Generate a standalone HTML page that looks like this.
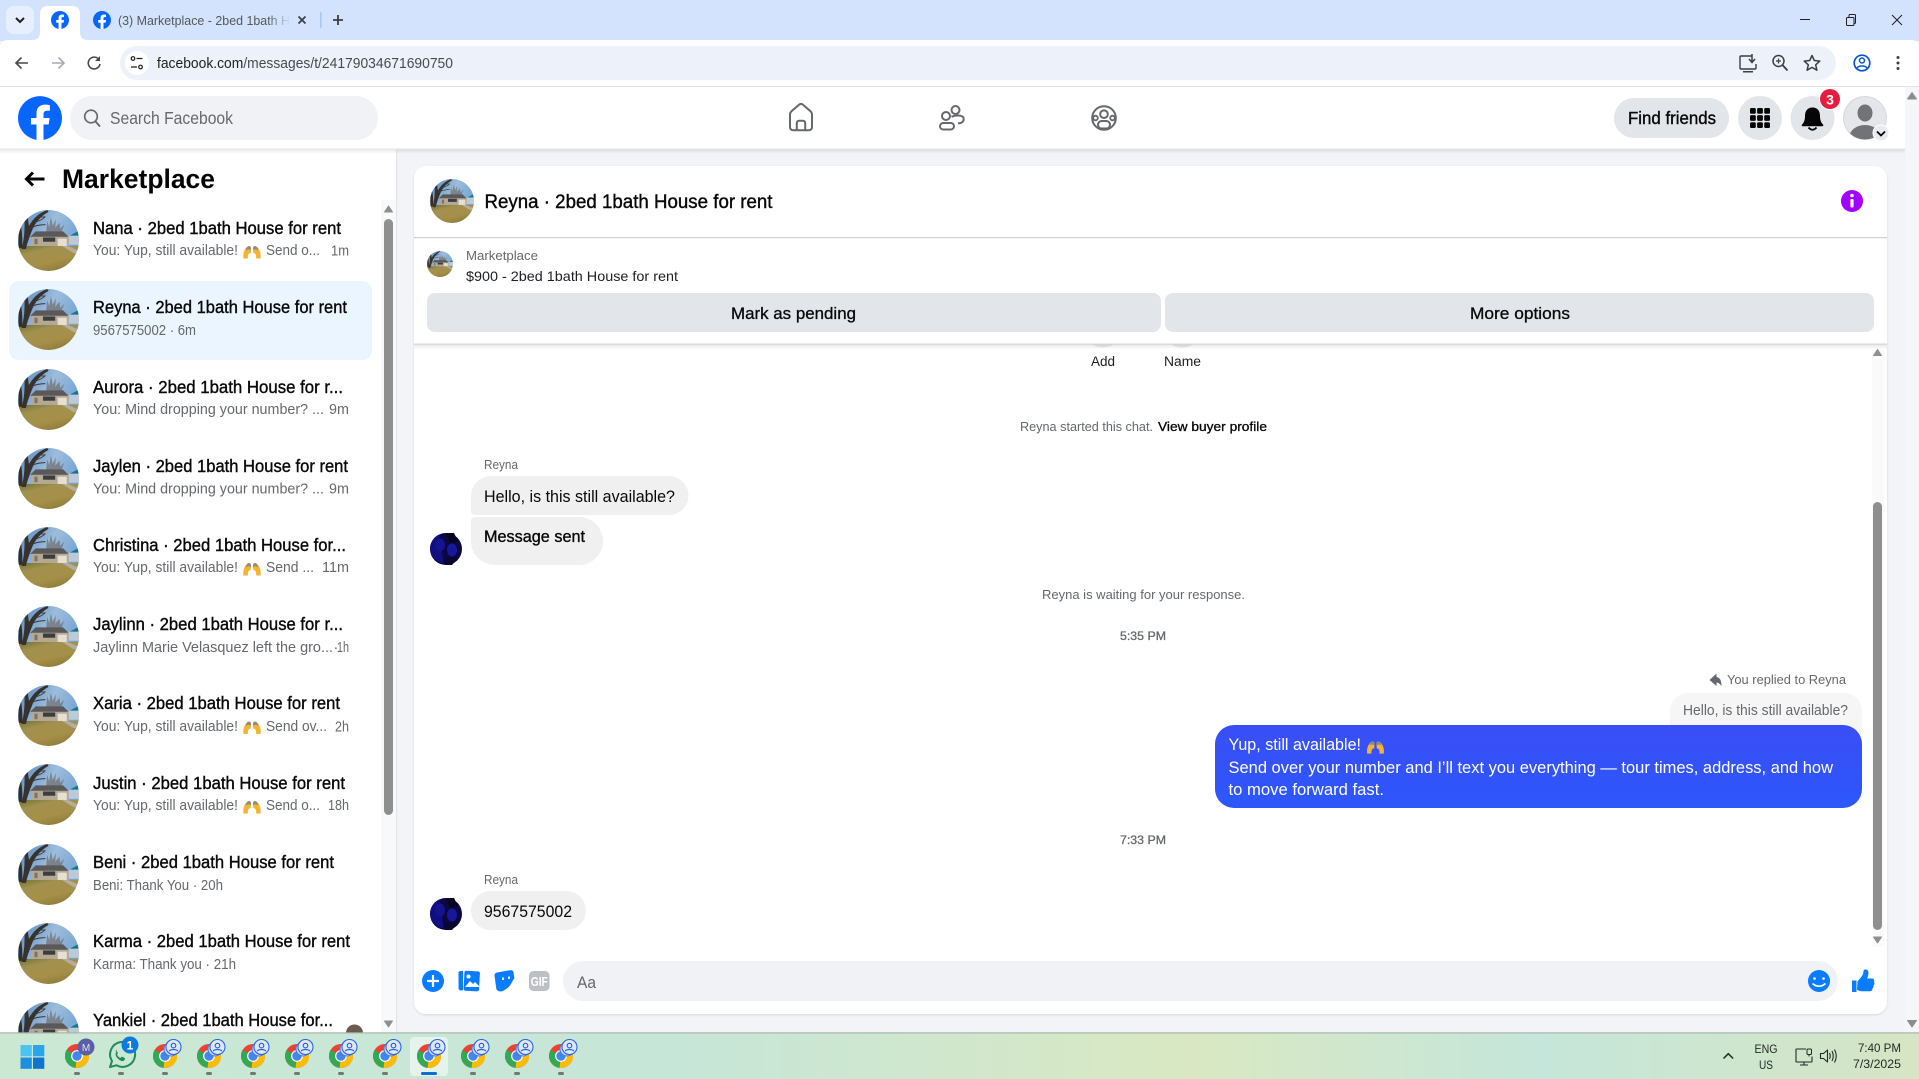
<!DOCTYPE html>
<html lang="en"><head><meta charset="utf-8"><title>(3) Marketplace - 2bed 1bath House for rent</title>
<style>
html,body{margin:0;padding:0;width:1919px;height:1079px;overflow:hidden;background:#f2f4f7}
svg{display:block}
text{font-family:"Liberation Sans",sans-serif;white-space:pre}
.t{font-size:17.5px;fill:#080809;stroke:#080809;stroke-width:.38}
.s{font-size:14.5px;fill:#65686c}
.g{font-size:13px;fill:#65686c}
</style></head><body>
<svg width="1919" height="1079" viewBox="0 0 1919 1079" xmlns="http://www.w3.org/2000/svg">
<defs>
<linearGradient id="tb" x1="0" x2="1" y1="0" y2="0"><stop offset="0" stop-color="#cbe8d3"/><stop offset=".35" stop-color="#c6e6d8"/><stop offset=".62" stop-color="#d9e8c2"/><stop offset=".8" stop-color="#c5e6da"/><stop offset="1" stop-color="#d6e5c4"/></linearGradient>
<linearGradient id="bl" x1="0" x2="0" y1="0" y2="1"><stop offset="0" stop-color="#3a4ef6"/><stop offset="1" stop-color="#2c57fb"/></linearGradient>
<linearGradient id="fade" x1="0" x2="1" y1="0" y2="0"><stop offset="0" stop-color="#d3e3fd" stop-opacity="0"/><stop offset="1" stop-color="#d3e3fd"/></linearGradient>
<linearGradient id="shd" x1="0" x2="0" y1="0" y2="1"><stop offset="0" stop-color="#000" stop-opacity=".09"/><stop offset="1" stop-color="#000" stop-opacity="0"/></linearGradient>
<linearGradient id="sky" x1="0" x2="1" y1="0" y2=".6"><stop offset="0" stop-color="#4f86c0"/><stop offset=".5" stop-color="#9dbcdb"/><stop offset="1" stop-color="#6c9fd2"/></linearGradient>
<linearGradient id="gr" x1="0" x2=".6" y1="0" y2="1"><stop offset="0" stop-color="#6d7038"/><stop offset=".3" stop-color="#a2914f"/><stop offset=".7" stop-color="#a68f48"/><stop offset="1" stop-color="#8f7e3a"/></linearGradient>
<filter id="sf" x="-5%" y="-5%" width="110%" height="110%"><feDropShadow dx="0" dy="1" stdDeviation="1" flood-color="#000" flood-opacity=".12"/></filter>
<filter id="bl1"><feGaussianBlur stdDeviation=".5"/></filter>
<clipPath id="cc"><circle cx="50" cy="50" r="50"/></clipPath>
<clipPath id="acl"><circle cx="1865" cy="118" r="21.5"/></clipPath>
<symbol id="fb" viewBox="0 0 24 24"><path fill="#0866ff" d="M24 12.073c0-6.627-5.373-12-12-12s-12 5.373-12 12c0 5.99 4.388 10.954 10.125 11.854v-8.385H7.078v-3.47h3.047V9.43c0-3.007 1.792-4.669 4.533-4.669 1.312 0 2.686.235 2.686.235v2.953H15.83c-1.491 0-1.956.925-1.956 1.874v2.25h3.328l-.532 3.47h-2.796v8.385C19.612 23.027 24 18.062 24 12.073z"/><path fill="#fff" d="M16.671 15.543l.532-3.47h-3.328V9.823c0-.949.465-1.874 1.956-1.874h1.513V4.996s-1.374-.235-2.686-.235c-2.741 0-4.533 1.662-4.533 4.669v2.643H7.078v3.47h3.047V24h3.75v-8.457z"/></symbol>
<symbol id="house" viewBox="0 0 100 100"><g clip-path="url(#cc)"><g filter="url(#bl1)">
<rect width="100" height="100" fill="url(#sky)"/>
<path d="M46 36l2-18 3 10 3-16 3 14 5-11-1 14 7-8 1 10 7-7-5 12z" fill="#6f6c6c" opacity=".7"/>
<path d="M85 42l15-8v10H85z" fill="#14758c"/>
<rect x="83" y="42" width="17" height="15" fill="#bcc9d6"/>
<path d="M20 44L29 35H74L83 44z" fill="#5a5858"/>
<rect x="23" y="44" width="60" height="16" fill="#b4a994"/>
<rect x="41" y="45" width="20" height="7" fill="#3e3c40"/>
<rect x="65" y="47" width="15" height="12" fill="#e6e0d2"/>
<rect x="27" y="47" width="5" height="9" fill="#7d7367"/>
<rect y="59" width="100" height="41" fill="url(#gr)"/>
<path d="M72 59h10l18 8v6l-10-3z" fill="#b3ad9d"/>
<path d="M6 64C10 46 12 36 10 0h5c1 14 2 20 3 26C25 14 34 5 48 0l2 3C37 10 27 22 22 36c-3 8-7 18-9 28z" fill="#37322d"/>
<path d="M0 62C2 46 1 30-1 18l4-2c3 14 5 30 4 46z" fill="#322d29"/>
<path d="M14 24C10 16 6 10 0 6M19 30c8-4 16-6 26-6M24 20C30 20 36 18 44 12M4 30C2 26 0 24-2 22M33 10c4 2 7 2 12 1M10 12C6 8 4 6 2 2" stroke="#3d3833" stroke-width="1.500" fill="none"/>
</g></g></symbol>
<symbol id="face" viewBox="0 0 32 32"><circle cx="16" cy="16" r="16" fill="#0c0742"/><path d="M0 16A16 16 0 0 1 9 1.500l5 29A16 16 0 0 1 0 16z" fill="#100e80"/><ellipse cx="10" cy="12" rx="5" ry="6.500" fill="#15148e"/><ellipse cx="22" cy="17" rx="5" ry="6.500" fill="#16189a"/><path d="M16 0h8l4 8-8 2z" fill="#06041e"/><path d="M13 28c4-5 10-5 15-3l-6 7h-6z" fill="#090630"/></symbol>
<symbol id="em" viewBox="0 0 20 16"><path d="M.5 15.500C-.2 9.500 1.500 4.500 5.500 2c2-1 3.500 0 3.500 2.500l-.5 5C6 9.500 5 12 5.500 15.500z" fill="#f6b32e"/><path d="M19.500 15.500C20.200 9.500 18.500 4.500 14.500 2c-2-1-3.500 0-3.500 2.500l.5 5c2.500 0 3.500 2.500 3 6z" fill="#f6b32e"/><path d="M5 2.300c2-1.300 3.700-.3 4 2L8.800 6C7 5 5 5 3 6.500 3.300 4.800 4 3.300 5 2.300zM15 2.300c-2-1.300-3.700-.3-4 2l.2 1.700c1.800-1 3.800-1 5.800.5-.3-1.700-1-3.200-2-4.200z" fill="#8f8a80"/></symbol>
<symbol id="chrome" viewBox="0 0 24 24"><circle cx="12" cy="12" r="12" fill="#ea4335"/><path d="M12 12L1.600 6A12 12 0 0 0 10.500 23.900z" fill="#34a853"/><path d="M12 6h10.400A12 12 0 0 1 10.500 23.900L12 12z" fill="#fbbc04"/><circle cx="12" cy="12" r="5.900" fill="#fff"/><circle cx="12" cy="12" r="4.700" fill="#4285f4"/></symbol>
<symbol id="pb" viewBox="0 0 18 18"><circle cx="7.500" cy="10" r="7" fill="#c7d4f4" stroke="#4a78d8" stroke-width="1"/><circle cx="10" cy="8" r="7.500" fill="#dfe7fb" stroke="#2f66d8" stroke-width="1.100"/><circle cx="10" cy="6.600" r="2.300" fill="none" stroke="#1f5fd6" stroke-width="1.100"/><path d="M5.600 12.200c1-2.200 7.800-2.200 8.800 0" fill="none" stroke="#1f5fd6" stroke-width="1.100"/></symbol>
</defs>

<!-- page background -->
<rect width="1919" height="1079" fill="#f2f4f7"/>

<!-- browser tab strip -->
<rect width="1919" height="41" fill="#d3e3fd"/>
<rect x="6" y="6" width="28" height="28" rx="8" fill="#e8effc"/>
<path d="M16 18l4 4 4-4" fill="none" stroke="#1f1f1f" stroke-width="2"/>
<path d="M32 40c5 0 8-2 8-8V14c0-5 3-8 8-8h24c5 0 8 3 8 8v18c0 6 3 8 8 8z" fill="#fff"/>
<use href="#fb" x="51" y="11" width="18" height="18"/>
<use href="#fb" x="93" y="11" width="18" height="18"/>
<text x="118" y="25" font-size="13" fill="#55585c" textLength="172" lengthAdjust="spacingAndGlyphs">(3) Marketplace - 2bed 1bath H</text>
<rect x="268" y="8" width="22" height="24" fill="url(#fade)"/>
<path d="M298.500 16.500l7 7M305.500 16.500l-7 7" stroke="#3b3e42" stroke-width="1.700"/>
<rect x="320" y="12" width="1.600" height="16" fill="#a8c7fa"/>
<path d="M338 15v10M333 20h10" stroke="#3b3e42" stroke-width="1.800"/>
<path d="M1800 19.500h10" stroke="#1f1f1f" stroke-width="1"/>
<rect x="1846.500" y="17.500" width="7.500" height="8" rx="1" fill="none" stroke="#1f1f1f" stroke-width="1"/><path d="M1849 17v-1.500q0-1 1-1h4.500q1 0 1 1v7q0 1-1 1" fill="none" stroke="#1f1f1f"/>
<path d="M1892 15l10 10M1902 15l-10 10" stroke="#1f1f1f" stroke-width="1"/>

<!-- toolbar -->
<path d="M0 48q0-8 8-8h1903q8 0 8 8v39H0z" fill="#fff"/>
<path d="M28 63H16.500M21.500 57.500L16 63l5.500 5.500" fill="none" stroke="#474a4e" stroke-width="1.600"/>
<path d="M52 63h12M58.500 57.500L64 63l-5.500 5.500" fill="none" stroke="#a8abaf" stroke-width="1.600"/>
<path d="M98.500 59A5.900 5.900 0 1 0 100 64" fill="none" stroke="#474a4e" stroke-width="1.600"/><path d="M100 56v5h-5z" fill="#474a4e"/>
<rect x="120" y="46" width="1716" height="34" rx="17" fill="#edf2fa"/>
<circle cx="137" cy="63" r="12" fill="#fff"/>
<circle cx="133" cy="58.500" r="1.800" fill="none" stroke="#1f1f1f" stroke-width="1.200"/><path d="M136.500 58.500h6M131 67h6" stroke="#1f1f1f" stroke-width="1.200"/><circle cx="140.500" cy="67" r="1.800" fill="none" stroke="#1f1f1f" stroke-width="1.200"/>
<text x="157" y="68" font-size="14.300" fill="#1f1f1f" textLength="296" lengthAdjust="spacingAndGlyphs">facebook.com<tspan fill="#474a4e">/messages/t/24179034671690750</tspan></text>
<path d="M1752 56h-11q-1 0-1 1v11q0 1 1 1h14q1 0 1-1v-4" fill="none" stroke="#3b3e42" stroke-width="1.400"/><path d="M1743 71h10v1.500h-10z" fill="#3b3e42"/><path d="M1752 54v8M1749 59l3 3.500 3-3.500" fill="none" stroke="#3b3e42" stroke-width="1.500"/>
<circle cx="1778.500" cy="61" r="5.500" fill="none" stroke="#3b3e42" stroke-width="1.500"/><path d="M1782.500 65l5 5.500" stroke="#3b3e42" stroke-width="1.800"/><path d="M1776 61h5M1778.500 58.500v5" stroke="#3b3e42" stroke-width="1.200"/>
<path d="M1812 55.500l2.300 5 5.500.6-4.100 3.700 1.200 5.400-4.900-2.800-4.900 2.800 1.200-5.400-4.100-3.700 5.500-.6z" fill="none" stroke="#3b3e42" stroke-width="1.500" stroke-linejoin="round"/>
<circle cx="1862" cy="63" r="7.800" fill="none" stroke="#0b57d0" stroke-width="1.700"/><circle cx="1862" cy="60.500" r="2.500" fill="none" stroke="#0b57d0" stroke-width="1.500"/><path d="M1856.800 68.500c1.300-3.300 9.100-3.300 10.400 0" fill="none" stroke="#0b57d0" stroke-width="1.500"/>
<circle cx="1898" cy="57.500" r="1.500" fill="#3b3e42"/><circle cx="1898" cy="63" r="1.500" fill="#3b3e42"/><circle cx="1898" cy="68.500" r="1.500" fill="#3b3e42"/>
<rect y="86" width="1919" height="1.400" fill="#e1e3e6"/>

<!-- page scrollbar -->
<rect x="1905" y="87" width="14" height="946" fill="#f5f6f9"/>
<path d="M1912 92.500l4.500 6.500h-9z" fill="#8c8c8c" stroke="#8c8c8c" stroke-linejoin="round"/>
<path d="M1912 1027l-4.500-6.500h9z" fill="#8c8c8c" stroke="#8c8c8c" stroke-linejoin="round"/>

<!-- sidebar -->
<rect x="0" y="149" width="396" height="884" fill="#fff"/>
<rect x="396" y="149" width="1.200" height="884" fill="#e3e5e8"/>

<!-- facebook header -->
<rect x="0" y="149" width="1905" height="5" fill="url(#shd)"/>
<rect x="0" y="87" width="1905" height="62" fill="#fff"/>
<rect x="0" y="148.500" width="1905" height=".8" fill="#e3e5e8"/>
<use href="#fb" x="18" y="96" width="44" height="44"/>
<rect x="70" y="96" width="308" height="44" rx="22" fill="#f0f2f5"/>
<circle cx="91" cy="116.500" r="6.300" fill="none" stroke="#65686c" stroke-width="1.700"/><path d="M95.500 121.500l4.500 5" stroke="#65686c" stroke-width="1.900"/>
<text x="110" y="124" font-size="17.500" fill="#65686c" textLength="123" lengthAdjust="spacingAndGlyphs">Search Facebook</text>

<!-- nav icons -->
<g transform="translate(0 .8)"><path d="M790 126v-12q0-2.500 2-4l7-6q2-1.800 4 0l7 6q2 1.500 2 4v12q0 3.500-3.500 3.500h-15q-3.500 0-3.500-3.500z" fill="none" stroke="#65686c" stroke-width="2"/>
<path d="M796.800 129.500v-7q0-2.500 2.500-2.500h3.400q2.500 0 2.500 2.500v7" fill="none" stroke="#65686c" stroke-width="2"/></g>
<circle cx="955.500" cy="110" r="4" fill="none" stroke="#65686c" stroke-width="2"/>
<circle cx="946" cy="116" r="4" fill="none" stroke="#65686c" stroke-width="2"/>
<rect x="940" y="123" width="14" height="6.500" rx="3.250" fill="none" stroke="#65686c" stroke-width="2"/>
<path d="M951.500 116.800c3.500-1.800 10.500-2 12 1 .8 3.500-1.500 5.500-5.500 5.500" fill="none" stroke="#65686c" stroke-width="2"/>
<circle cx="1104" cy="118" r="11.800" fill="none" stroke="#65686c" stroke-width="2"/>
<circle cx="1104" cy="114.200" r="3.800" fill="none" stroke="#65686c" stroke-width="2"/>
<rect x="1098" y="121" width="12" height="7.500" rx="3.700" fill="none" stroke="#65686c" stroke-width="2"/>
<circle cx="1095.500" cy="118" r="2.300" fill="none" stroke="#65686c" stroke-width="1.800"/><circle cx="1112.500" cy="118" r="2.300" fill="none" stroke="#65686c" stroke-width="1.800"/>

<!-- header right -->
<rect x="1614" y="98" width="115" height="40" rx="20" fill="#e2e5e9"/>
<text x="1628" y="124" font-size="17.500" fill="#080809" stroke="#080809" stroke-width=".38" textLength="88" lengthAdjust="spacingAndGlyphs">Find friends</text>
<circle cx="1760" cy="118" r="22" fill="#e2e5e9"/>
<g fill="#050505"><rect x="1750" y="108" width="5.800" height="5.800" rx="1.400"/><rect x="1757.100" y="108" width="5.800" height="5.800" rx="1.400"/><rect x="1764.200" y="108" width="5.800" height="5.800" rx="1.400"/><rect x="1750" y="115.100" width="5.800" height="5.800" rx="1.400"/><rect x="1757.100" y="115.100" width="5.800" height="5.800" rx="1.400"/><rect x="1764.200" y="115.100" width="5.800" height="5.800" rx="1.400"/><rect x="1750" y="122.200" width="5.800" height="5.800" rx="1.400"/><rect x="1757.100" y="122.200" width="5.800" height="5.800" rx="1.400"/><rect x="1764.200" y="122.200" width="5.800" height="5.800" rx="1.400"/></g>
<circle cx="1812.500" cy="118" r="22" fill="#e2e5e9"/>
<path d="M1812.500 107.500c-5.500 0-7.500 4-7.500 8.500 0 4-1 6.500-3 8.500-.8 1 0 1.800 1 1.800h19c1 0 1.800-.8 1-1.800-2-2-3-4.500-3-8.500 0-4.500-2-8.500-7.500-8.500z" fill="#050505"/><path d="M1808.500 127.500q4 4.500 8 0" fill="none" stroke="#050505" stroke-width="1.800"/>
<circle cx="1830" cy="99" r="11" fill="#fff"/><circle cx="1830" cy="99" r="10" fill="#e41e3f"/>
<text x="1830" y="104.500" font-size="14" font-weight="700" fill="#fff" text-anchor="middle">3</text>
<circle cx="1865" cy="118" r="22" fill="#d5d7db"/><circle cx="1865" cy="118" r="21" fill="#e4e6ea"/>
<g clip-path="url(#acl)"><ellipse cx="1865" cy="113" rx="7.500" ry="8.500" fill="#717377"/><ellipse cx="1865" cy="138" rx="16" ry="13" fill="#717377"/></g>
<circle cx="1881" cy="133" r="8.500" fill="#fff"/><circle cx="1881" cy="133" r="7.500" fill="#e8eaed"/>
<path d="M1877 131.500l4 4 4-4" fill="none" stroke="#050505" stroke-width="1.800"/>

<!-- sidebar content -->
<path d="M44.500 179H26.500M33 172.500L26.500 179l6.500 6.500" fill="none" stroke="#050505" stroke-width="3"/>
<text x="62" y="188" font-size="26.500" font-weight="700" fill="#050505" textLength="153" lengthAdjust="spacingAndGlyphs">Marketplace</text>

<rect x="9" y="281" width="363" height="79" rx="10" fill="#ebf5ff"/>

<use href="#house" x="18" y="210" width="61" height="61"/>
<use href="#house" x="18" y="289" width="61" height="61"/>
<use href="#house" x="18" y="369" width="61" height="61"/>
<use href="#house" x="18" y="448" width="61" height="61"/>
<use href="#house" x="18" y="527" width="61" height="61"/>
<use href="#house" x="18" y="606" width="61" height="61"/>
<use href="#house" x="18" y="685" width="61" height="61"/>
<use href="#house" x="18" y="764" width="61" height="61"/>
<use href="#house" x="18" y="844" width="61" height="61"/>
<use href="#house" x="18" y="923" width="61" height="61"/>
<use href="#house" x="18" y="1002" width="61" height="61"/>

<text class="t" x="93" y="234" textLength="248" lengthAdjust="spacingAndGlyphs">Nana · 2bed 1bath House for rent</text>
<text class="s" x="93" y="255" textLength="145" lengthAdjust="spacingAndGlyphs">You: Yup, still available!</text>
<use href="#em" x="243" y="244.500" width="18" height="14.500"/>
<text class="s" x="266" y="255" textLength="54" lengthAdjust="spacingAndGlyphs">Send o...</text>
<text class="s" x="331" y="255.500" textLength="18" lengthAdjust="spacingAndGlyphs">1m</text>

<text class="t" x="93" y="313" textLength="254" lengthAdjust="spacingAndGlyphs">Reyna · 2bed 1bath House for rent</text>
<text class="s" x="93" y="335" textLength="103" lengthAdjust="spacingAndGlyphs">9567575002 · 6m</text>

<text class="t" x="93" y="393" textLength="250" lengthAdjust="spacingAndGlyphs">Aurora · 2bed 1bath House for r...</text>
<text class="s" x="93" y="414" textLength="231" lengthAdjust="spacingAndGlyphs">You: Mind dropping your number? ...</text>
<text class="s" x="329" y="414" textLength="20" lengthAdjust="spacingAndGlyphs">9m</text>

<text class="t" x="93" y="472" textLength="255" lengthAdjust="spacingAndGlyphs">Jaylen · 2bed 1bath House for rent</text>
<text class="s" x="93" y="493.500" textLength="231" lengthAdjust="spacingAndGlyphs">You: Mind dropping your number? ...</text>
<text class="s" x="329" y="493.500" textLength="20" lengthAdjust="spacingAndGlyphs">9m</text>

<text class="t" x="93" y="551" textLength="253" lengthAdjust="spacingAndGlyphs">Christina · 2bed 1bath House for...</text>
<text class="s" x="93" y="572" textLength="145" lengthAdjust="spacingAndGlyphs">You: Yup, still available!</text>
<use href="#em" x="243" y="561.500" width="18" height="14.500"/>
<text class="s" x="266" y="572" textLength="48" lengthAdjust="spacingAndGlyphs">Send ...</text>
<text class="s" x="322" y="572" textLength="27" lengthAdjust="spacingAndGlyphs">11m</text>

<text class="t" x="93" y="630" textLength="250" lengthAdjust="spacingAndGlyphs">Jaylinn · 2bed 1bath House for r...</text>
<text class="s" x="93" y="652" textLength="240" lengthAdjust="spacingAndGlyphs">Jaylinn Marie Velasquez left the gro...</text>
<text class="s" x="333.500" y="652">·</text>
<text class="s" x="337" y="652" textLength="12" lengthAdjust="spacingAndGlyphs">1h</text>

<text class="t" x="93" y="709" textLength="247" lengthAdjust="spacingAndGlyphs">Xaria · 2bed 1bath House for rent</text>
<text class="s" x="93" y="731" textLength="145" lengthAdjust="spacingAndGlyphs">You: Yup, still available!</text>
<use href="#em" x="243" y="720" width="18" height="14.500"/>
<text class="s" x="266" y="731" textLength="61" lengthAdjust="spacingAndGlyphs">Send ov...</text>
<text class="s" x="335" y="731.500" textLength="14" lengthAdjust="spacingAndGlyphs">2h</text>

<text class="t" x="93" y="789" textLength="252" lengthAdjust="spacingAndGlyphs">Justin · 2bed 1bath House for rent</text>
<text class="s" x="93" y="810" textLength="145" lengthAdjust="spacingAndGlyphs">You: Yup, still available!</text>
<use href="#em" x="243" y="799.500" width="18" height="14.500"/>
<text class="s" x="266" y="810" textLength="54" lengthAdjust="spacingAndGlyphs">Send o...</text>
<text class="s" x="328" y="810" textLength="21" lengthAdjust="spacingAndGlyphs">18h</text>

<text class="t" x="93" y="868" textLength="241" lengthAdjust="spacingAndGlyphs">Beni · 2bed 1bath House for rent</text>
<text class="s" x="93" y="890" textLength="130" lengthAdjust="spacingAndGlyphs">Beni: Thank You · 20h</text>

<text class="t" x="93" y="947" textLength="257" lengthAdjust="spacingAndGlyphs">Karma · 2bed 1bath House for rent</text>
<text class="s" x="93" y="969" textLength="143" lengthAdjust="spacingAndGlyphs">Karma: Thank you · 21h</text>

<text class="t" x="93" y="1026" textLength="240" lengthAdjust="spacingAndGlyphs">Yankiel · 2bed 1bath House for...</text>
<circle cx="354.500" cy="1033" r="8.500" fill="#6b5a4e"/>

<!-- sidebar scrollbar -->
<rect x="381" y="200" width="15" height="833" fill="#f8f9fa"/>
<rect x="384" y="219" width="9" height="596" rx="4.500" fill="#8f8f8f"/>
<path d="M388.500 206l4 6h-8z" fill="#8f8f8f" stroke="#8f8f8f" stroke-linejoin="round"/>
<path d="M388.500 1027l-4-6h8z" fill="#8f8f8f" stroke="#8f8f8f" stroke-linejoin="round"/>

<!-- main card -->
<rect x="414" y="166" width="1473" height="848" rx="12" fill="#fff" filter="url(#sf)"/>
<use href="#house" x="430" y="179" width="44" height="44"/>
<text x="484.500" y="208" font-size="19" fill="#080809" stroke="#080809" stroke-width=".38" textLength="288" lengthAdjust="spacingAndGlyphs">Reyna · 2bed 1bath House for rent</text>
<circle cx="1852" cy="201" r="11" fill="#a200ff"/><circle cx="1852" cy="195.500" r="1.800" fill="#fff"/><rect x="1850.400" y="199" width="3.200" height="8.500" rx="1" fill="#fff"/>
<rect x="414" y="237" width="1473" height="1.200" fill="#ced0d4"/>
<use href="#house" x="427" y="251" width="26" height="26"/>
<text class="g" x="466" y="260" textLength="72" lengthAdjust="spacingAndGlyphs">Marketplace</text>
<text x="466" y="281" font-size="14" fill="#1c1e21" textLength="212" lengthAdjust="spacingAndGlyphs">$900 - 2bed 1bath House for rent</text>
<rect x="427" y="293" width="734" height="39" rx="8" fill="#e2e5e9"/>
<rect x="1165" y="293" width="709" height="39" rx="8" fill="#e2e5e9"/>
<text x="731" y="319" font-size="17" fill="#080809" stroke="#080809" stroke-width=".3" textLength="125" lengthAdjust="spacingAndGlyphs">Mark as pending</text>
<text x="1470" y="319" font-size="17" fill="#080809" stroke="#080809" stroke-width=".3" textLength="100" lengthAdjust="spacingAndGlyphs">More options</text>

<!-- messages area -->
<path d="M1092 344.500q11 6 22 0zM1171 344.500q11 6 22 0z" fill="#e8eaed"/>
<rect x="414" y="343.500" width="1473" height="1.200" fill="#d8dadd"/>
<rect x="414" y="344.500" width="1473" height="5" fill="url(#shd)"/>
<rect x="1872" y="350" width="12" height="597" fill="#fafafa"/>
<rect x="1873" y="502" width="9" height="428" rx="4.500" fill="#8f8f8f"/>
<path d="M1877.500 349.500l4 6h-8z" fill="#8f8f8f" stroke="#8f8f8f" stroke-linejoin="round"/>
<path d="M1877.500 943l-4-6h8z" fill="#8f8f8f" stroke="#8f8f8f" stroke-linejoin="round"/>
<text x="1091" y="366" font-size="13.500" fill="#1c1e21" textLength="24" lengthAdjust="spacingAndGlyphs">Add</text>
<text x="1164" y="366" font-size="13.500" fill="#1c1e21" textLength="37" lengthAdjust="spacingAndGlyphs">Name</text>
<text class="g" x="1020" y="431" textLength="133" lengthAdjust="spacingAndGlyphs">Reyna started this chat.</text>
<text x="1158" y="431" font-size="13" fill="#050505" stroke="#050505" stroke-width=".3" textLength="109" lengthAdjust="spacingAndGlyphs">View buyer profile</text>

<text class="g" x="484" y="469" textLength="34" lengthAdjust="spacingAndGlyphs">Reyna</text>
<path d="M491 476h178a19.500 19.500 0 0 1 0 39H475a4 4 0 0 1-4-4v-15a20 20 0 0 1 20-20z" fill="#f0f0f0"/>
<text x="484" y="502" font-size="16.500" fill="#080809" textLength="191" lengthAdjust="spacingAndGlyphs">Hello, is this still available?</text>
<path d="M475 517h104a24 24 0 0 1 24 24 24 24 0 0 1-24 24h-84a24 24 0 0 1-24-24v-20a4 4 0 0 1 4-4z" fill="#f0f0f0"/>
<text x="484" y="542" font-size="16.500" fill="#080809" stroke="#080809" stroke-width=".35" textLength="101" lengthAdjust="spacingAndGlyphs">Message sent</text>
<use href="#face" x="430" y="533" width="32" height="32"/>

<text class="g" x="1042" y="599" textLength="203" lengthAdjust="spacingAndGlyphs">Reyna is waiting for your response.</text>
<text x="1120" y="640" font-size="12" fill="#65686c" stroke="#65686c" stroke-width=".3" textLength="46" lengthAdjust="spacingAndGlyphs">5:35 PM</text>

<path d="M1716.500 673.500L1709.500 680l7 6v-3.500c2 0 3.500 1.500 5 3.500 0-5.500-1.500-8.500-5-9z" fill="#65686c"/>
<text class="g" x="1727" y="684" textLength="119" lengthAdjust="spacingAndGlyphs">You replied to Reyna</text>
<rect x="1670" y="693" width="192" height="52" rx="18" fill="#f6f6f6"/>
<text x="1683" y="715" font-size="14.500" fill="#65686c" textLength="165" lengthAdjust="spacingAndGlyphs">Hello, is this still available?</text>
<rect x="1215" y="725" width="647" height="83" rx="19" fill="url(#bl)"/>
<text x="1228.500" y="750" font-size="16.500" fill="#fff" textLength="132.500" lengthAdjust="spacingAndGlyphs">Yup, still available!</text>
<use href="#em" x="1366" y="740" width="19" height="14"/>
<text x="1228.500" y="773" font-size="16.500" fill="#fff" textLength="604.500" lengthAdjust="spacingAndGlyphs">Send over your number and I’ll text you everything — tour times, address, and how</text>
<text x="1228.500" y="795" font-size="16.500" fill="#fff" textLength="155.500" lengthAdjust="spacingAndGlyphs">to move forward fast.</text>

<text x="1120" y="844" font-size="12" fill="#65686c" stroke="#65686c" stroke-width=".3" textLength="46" lengthAdjust="spacingAndGlyphs">7:33 PM</text>
<text class="g" x="484" y="884" textLength="34" lengthAdjust="spacingAndGlyphs">Reyna</text>
<rect x="471" y="891" width="115" height="39" rx="19.500" fill="#f0f0f0"/>
<text x="484" y="917" font-size="16.500" fill="#080809" textLength="88" lengthAdjust="spacingAndGlyphs">9567575002</text>
<use href="#face" x="430" y="898" width="32" height="32"/>

<!-- composer -->
<circle cx="433" cy="981" r="11" fill="#0a7cff"/><path d="M433 975v12M427 981h12" stroke="#fff" stroke-width="2.200"/>
<path d="M460 971l-1.500 1v17l1.500 1.500 3-.3V971z" fill="#0a7cff"/><rect x="464" y="971" width="15.500" height="20" rx="2" fill="#0a7cff" transform="rotate(3 471 981)"/><circle cx="468.500" cy="976.500" r="2" fill="#fff"/><path d="M465 987l5-6 3 3 2-2 4 4v1z" fill="#fff"/>
<path d="M494.500 975.500q0-2.500 2.500-3l13-2.300q3-.3 3.500 2l.8 5.500c-.8 4-1.500 5-3 7-1.500 2-5 4.800-9 6.500-2.500.7-5.300-.2-6-2.500z" fill="#0a7cff"/><path d="M503 977.500v2.500M509 976.500v2.500" stroke="#fff" stroke-width="1.700"/><path d="M505 990.500c4-2 7-6 9-11" fill="none" stroke="#fff" stroke-width="1.300"/>
<rect x="529" y="971" width="20.500" height="20" rx="4.500" fill="#bcc0c4"/>
<text x="539.300" y="986" font-size="12.500" font-weight="700" fill="#fff" text-anchor="middle" textLength="17" lengthAdjust="spacingAndGlyphs">GIF</text>
<rect x="563" y="961" width="1275" height="40" rx="20" fill="#f0f2f5"/>
<text x="577" y="988" font-size="17" fill="#65686c" textLength="19" lengthAdjust="spacingAndGlyphs">Aa</text>
<circle cx="1819" cy="981" r="11" fill="#0a7cff"/><circle cx="1814.500" cy="978.500" r="1.300" fill="#fff"/><circle cx="1823.500" cy="978.500" r="1.300" fill="#fff"/><path d="M1812.500 983.500q6.500 5.500 13 0" fill="none" stroke="#fff" stroke-width="1.800"/>
<path d="M1852 980.500h4.500v11.500H1852z" fill="#0a7cff"/>
<path d="M1857.500 981.500l4.500-5.500c1-1.500 1.500-3.500 1.500-5 0-2 4-2.500 4.800.5.500 2.500-.3 5-1.300 7h5c2 0 2.800 2 2 3.500.8 1 .6 2.600-.5 3.300.4 1.300-.1 2.500-1 3 .1 1.500-.8 3-2.500 3h-8c-2.500 0-3.500-1-5-1.500z" fill="#0a7cff"/>

<!-- taskbar -->
<rect x="0" y="1033" width="1919" height="46" fill="url(#tb)"/>
<rect x="0" y="1032.300" width="1919" height="1.200" fill="#a8b5ab"/>
<g>
<rect x="20.500" y="1045" width="11.300" height="11.300" fill="#4bc4f4"/><rect x="33" y="1045" width="11.300" height="11.300" fill="#29a6ea"/><rect x="20.500" y="1057.500" width="11.300" height="11.300" fill="#1c8fe0"/><rect x="33" y="1057.500" width="11.300" height="11.300" fill="#0f74cf"/>
</g>
<rect x="410" y="1037" width="38" height="39" rx="4" fill="#fff" fill-opacity=".5"/>
<rect x="421" y="1072" width="16" height="3" rx="1.500" fill="#0a6fd1"/>

<use href="#chrome" x="65" y="1044" width="24" height="24"/><circle cx="86" cy="1047" r="8.500" fill="#5b5fa8"/><text x="86" y="1051" font-size="10" fill="#dfe0f2" text-anchor="middle">M</text>
<path d="M110 1067l2-6a12.500 12.500 0 1 1 4.500 4.300z" fill="none" stroke="#1e8e57" stroke-width="2" stroke-linejoin="round"/>
<path d="M116.500 1052c-1.500 1.200-1.300 3.500.8 6 2.200 2.600 4.800 3.800 6.500 2.700l1.200-1.500c.3-.6 0-1-.5-1.300l-2.300-1.100c-.5-.2-.9 0-1.200.5l-.5.7c-1.500-.5-3-2.200-3.500-3.600l.6-.7c.3-.3.300-.7.100-1.100l-1-2c-.3-.6-.8-.7-1.200 0z" fill="#1e8e57"/>
<circle cx="130" cy="1045" r="8.500" fill="#0c7bdc"/><text x="130" y="1049.500" font-size="12" font-weight="700" fill="#fff" text-anchor="middle">1</text>

<use href="#chrome" x="153" y="1044" width="24" height="24"/><use href="#pb" x="163.500" y="1039" width="18" height="18"/>
<use href="#chrome" x="197" y="1044" width="24" height="24"/><use href="#pb" x="207.500" y="1039" width="18" height="18"/>
<use href="#chrome" x="241" y="1044" width="24" height="24"/><use href="#pb" x="251.500" y="1039" width="18" height="18"/>
<use href="#chrome" x="285" y="1044" width="24" height="24"/><use href="#pb" x="295.500" y="1039" width="18" height="18"/>
<use href="#chrome" x="329" y="1044" width="24" height="24"/><use href="#pb" x="339.500" y="1039" width="18" height="18"/>
<use href="#chrome" x="373" y="1044" width="24" height="24"/><use href="#pb" x="383.500" y="1039" width="18" height="18"/>
<use href="#chrome" x="417" y="1044" width="24" height="24"/><use href="#pb" x="427.500" y="1039" width="18" height="18"/>
<use href="#chrome" x="461" y="1044" width="24" height="24"/><use href="#pb" x="471.500" y="1039" width="18" height="18"/>
<use href="#chrome" x="505" y="1044" width="24" height="24"/><use href="#pb" x="515.500" y="1039" width="18" height="18"/>
<use href="#chrome" x="549" y="1044" width="24" height="24"/><use href="#pb" x="559.500" y="1039" width="18" height="18"/>
<g fill="#6f7a74"><rect x="74" y="1072" width="6" height="3" rx="1.500"/><rect x="118" y="1072" width="6" height="3" rx="1.500"/><rect x="162" y="1072" width="6" height="3" rx="1.500"/><rect x="206" y="1072" width="6" height="3" rx="1.500"/><rect x="250" y="1072" width="6" height="3" rx="1.500"/><rect x="294" y="1072" width="6" height="3" rx="1.500"/><rect x="338" y="1072" width="6" height="3" rx="1.500"/><rect x="382" y="1072" width="6" height="3" rx="1.500"/><rect x="470" y="1072" width="6" height="3" rx="1.500"/><rect x="514" y="1072" width="6" height="3" rx="1.500"/><rect x="558" y="1072" width="6" height="3" rx="1.500"/></g>

<!-- tray -->
<path d="M1723.500 1058.500l4.800-4.800 4.800 4.800" fill="none" stroke="#1f2a24" stroke-width="1.500"/>
<text x="1766" y="1053" font-size="12" fill="#1f2a24" text-anchor="middle" textLength="23" lengthAdjust="spacingAndGlyphs">ENG</text>
<text x="1766" y="1069" font-size="12" fill="#1f2a24" text-anchor="middle" textLength="14" lengthAdjust="spacingAndGlyphs">US</text>
<path d="M1806 1049h-9.500q-.5 0-.5.500v12q0 .5.500.5h15q.5 0 .5-.5v-5M1804 1062.500v2.500M1800 1065h8" fill="none" stroke="#1f2a24" stroke-width="1.100"/><rect x="1807" y="1049" width="4.500" height="5.500" rx="1" fill="none" stroke="#1f2a24" stroke-width="1"/><path d="M1809 1054.500v2" stroke="#1f2a24"/>
<path d="M1820.500 1053.500h3l4-3.500v12l-4-3.500h-3z" fill="none" stroke="#1f2a24" stroke-width="1.100" stroke-linejoin="round"/><path d="M1829.500 1053q1.500 3 0 6M1832 1051q2.500 5 0 10M1834.500 1049.500q3.500 6.500 0 13" fill="none" stroke="#1f2a24" stroke-width="1.100"/>
<text x="1901" y="1052" font-size="12" fill="#1f2a24" text-anchor="end" textLength="43" lengthAdjust="spacingAndGlyphs">7:40 PM</text>
<text x="1901" y="1068" font-size="12" fill="#1f2a24" text-anchor="end" textLength="48" lengthAdjust="spacingAndGlyphs">7/3/2025</text>
</svg>
</body></html>
